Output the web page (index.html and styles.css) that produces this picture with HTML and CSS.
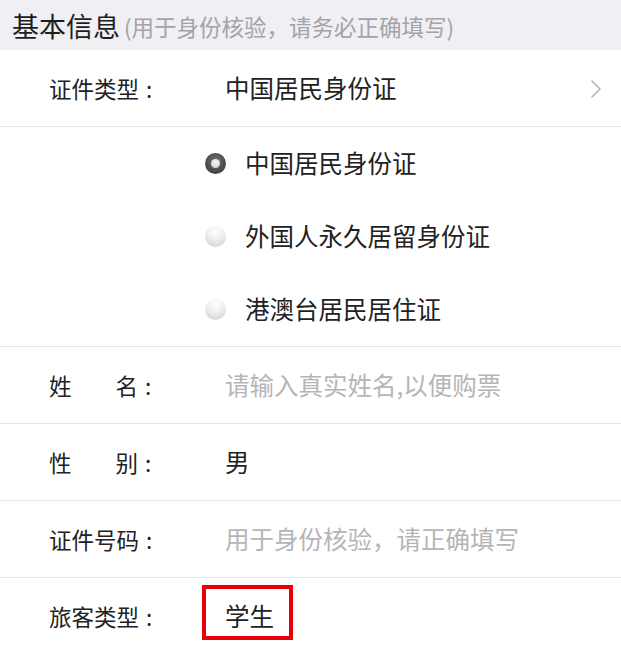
FILE: index.html
```html
<!DOCTYPE html>
<html lang="zh-CN">
<head>
<meta charset="utf-8">
<title>基本信息</title>
<link rel="stylesheet" href="styles.css">
</head>
<body>
<div class="page">
  <div class="section-head">
    <span class="title">基本信息</span><span class="subtitle">(用于身份核验，请务必正确填写)</span>
  </div>

  <div class="row">
    <div class="label"><span class="label-text">证件类型</span><span class="colon">:</span></div>
    <div class="value">中国居民身份证</div>
    <svg class="chevron" width="12" height="20" viewBox="0 0 12 20"><polyline points="2,2 10,10 2,18" fill="none" stroke="#b5b5b5" stroke-width="1.7" stroke-linecap="round" stroke-linejoin="round"/></svg>
  </div>

  <div class="radio-group">
    <div class="radio-item"><span class="radio checked"></span><span class="radio-text">中国居民身份证</span></div>
    <div class="radio-item"><span class="radio"></span><span class="radio-text">外国人永久居留身份证</span></div>
    <div class="radio-item"><span class="radio"></span><span class="radio-text">港澳台居民居住证</span></div>
  </div>

  <div class="row">
    <div class="label"><span class="label-text spread"><span>姓</span><span>名</span></span><span class="colon">:</span></div>
    <div class="value placeholder">请输入真实姓名,以便购票</div>
  </div>

  <div class="row">
    <div class="label"><span class="label-text spread"><span>性</span><span>别</span></span><span class="colon">:</span></div>
    <div class="value">男</div>
  </div>

  <div class="row">
    <div class="label"><span class="label-text">证件号码</span><span class="colon">:</span></div>
    <div class="value placeholder">用于身份核验，请正确填写</div>
  </div>

  <div class="row">
    <div class="label"><span class="label-text">旅客类型</span><span class="colon">:</span></div>
    <div class="value"><span class="highlight">学生</span></div>
  </div>
</div>
</body>
</html>
```

FILE: styles.css
```css
html, body {
  margin: 0;
  padding: 0;
  background: #ffffff;
}

.page {
  width: 621px;
  font-family: "Noto Sans CJK SC", "Noto Sans", sans-serif;
  color: #222222;
}

.section-head {
  height: 50px;
  background: #efeff4;
  display: flex;
  align-items: center;
  padding-left: 12px;
  box-sizing: border-box;
}

.title {
  font-size: 27px;
  color: #1e1e1e;
  line-height: 1;
}

.subtitle {
  font-size: 22.5px;
  color: #a3a3a8;
  margin-left: 4px;
  line-height: 1;
  position: relative;
  top: 1px;
}

.row {
  height: 76px;
  border-bottom: 1px solid #e6e6e6;
  display: flex;
  align-items: center;
  padding-left: 49px;
  padding-right: 19px;
}

.label {
  width: 176px;
  flex: none;
  display: flex;
  align-items: center;
  font-size: 22.5px;
  color: #222222;
}

.label-text {
  display: inline-flex;
  width: 90px;
}

.label-text.spread {
  justify-content: space-between;
  width: 89px;
}

.colon {
  margin-left: 7px;
}

.value {
  flex: 1;
  font-size: 24.5px;
  color: #222222;
  line-height: 1;
}

.placeholder {
  color: #b5b5b8;
}

.chevron {
  flex: none;
  margin-top: 2px;
}

.highlight {
  display: inline-block;
  position: relative;
}

.highlight::before {
  content: "";
  position: absolute;
  left: -23px;
  top: -19px;
  width: 83px;
  height: 47px;
  border: 4px solid #e8000b;
}

.radio-group {
  border-bottom: 1px solid #e6e6e6;
  padding-left: 205px;
  box-sizing: border-box;
  display: flex;
  flex-direction: column;
}

.radio-item {
  height: 73px;
  display: flex;
  align-items: center;
}

.radio {
  width: 21px;
  height: 21px;
  border-radius: 50%;
  flex: none;
  background: radial-gradient(circle at 50% 25%, #ffffff 0%, #f2f2f2 35%, #cfcfd2 100%);
  position: relative;
}

.radio.checked {
  background: radial-gradient(circle at 50% 40%, #777777 0%, #4a4a4a 60%, #3a3a3a 100%);
}

.radio.checked::after {
  content: "";
  position: absolute;
  left: 6px;
  top: 6px;
  width: 9px;
  height: 9px;
  border-radius: 50%;
  background: radial-gradient(circle at 50% 35%, #f4f4f4 0%, #cfcfcf 100%);
}

.radio-text {
  margin-left: 19px;
  font-size: 24.5px;
  color: #222222;
  line-height: 1;
}
```
